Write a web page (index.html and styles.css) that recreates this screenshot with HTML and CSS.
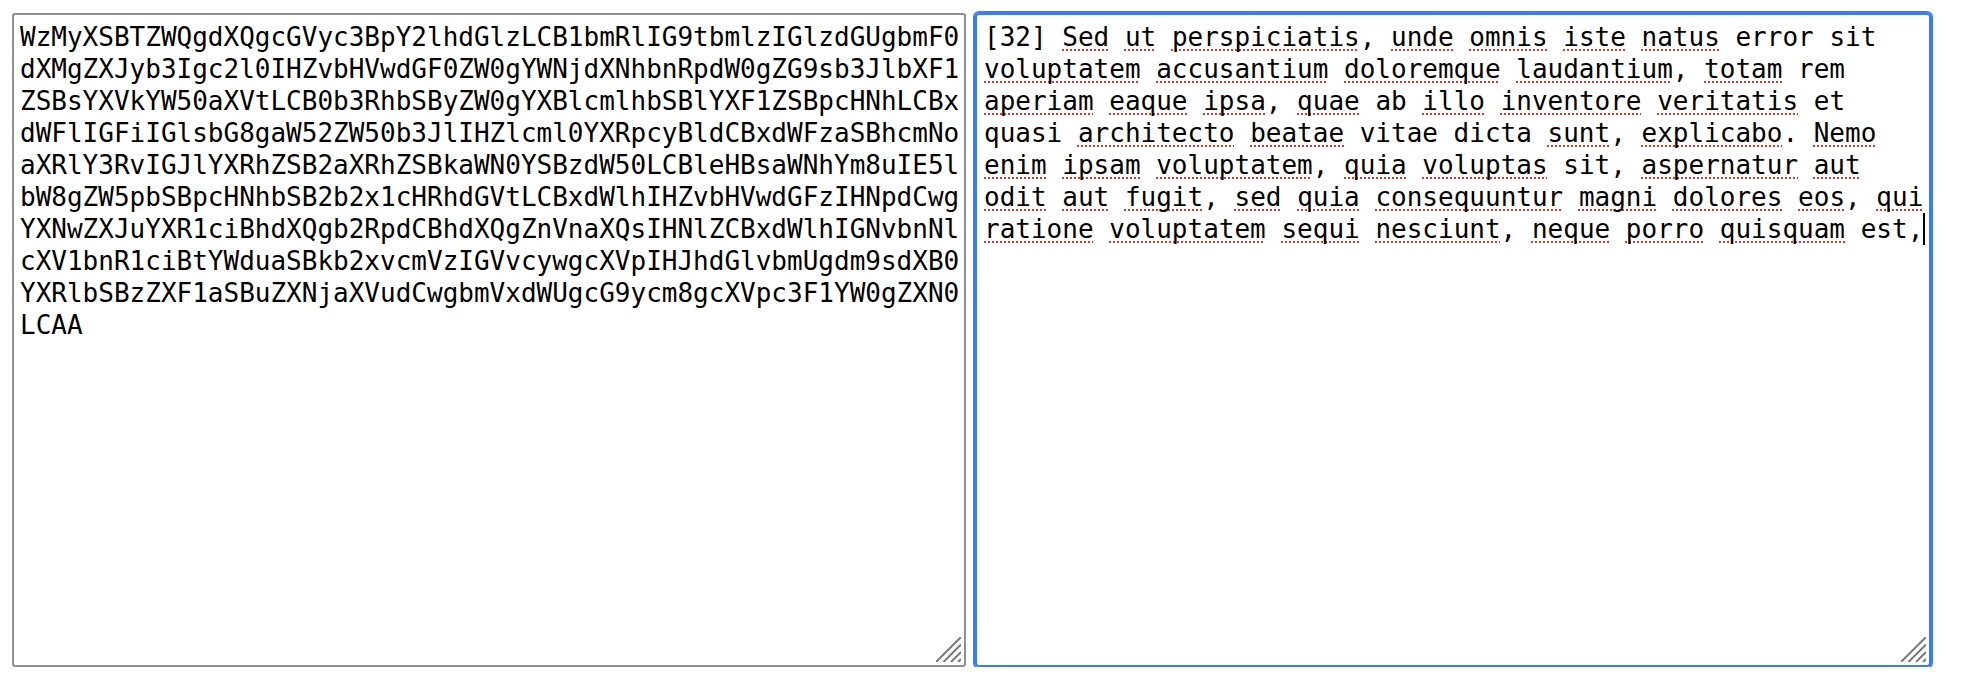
FILE: index.html
```html
<!DOCTYPE html>
<html lang="la">
<head>
<meta charset="utf-8">
<title>Base64</title>
<link rel="stylesheet" href="styles.css">
</head>
<body>
<main class="page">
  <div class="box box--plain" role="textbox" aria-multiline="true">
    <div class="text text--b64">WzMyXSBTZWQgdXQgcGVyc3BpY2lhdGlzLCB1bmRlIG9tbmlzIGlzdGUgbmF0dXMgZXJyb3Igc2l0IHZvbHVwdGF0ZW0gYWNjdXNhbnRpdW0gZG9sb3JlbXF1ZSBsYXVkYW50aXVtLCB0b3RhbSByZW0gYXBlcmlhbSBlYXF1ZSBpcHNhLCBxdWFlIGFiIGlsbG8gaW52ZW50b3JlIHZlcml0YXRpcyBldCBxdWFzaSBhcmNoaXRlY3RvIGJlYXRhZSB2aXRhZSBkaWN0YSBzdW50LCBleHBsaWNhYm8uIE5lbW8gZW5pbSBpcHNhbSB2b2x1cHRhdGVtLCBxdWlhIHZvbHVwdGFzIHNpdCwgYXNwZXJuYXR1ciBhdXQgb2RpdCBhdXQgZnVnaXQsIHNlZCBxdWlhIGNvbnNlcXV1bnR1ciBtYWduaSBkb2xvcmVzIGVvcywgcXVpIHJhdGlvbmUgdm9sdXB0YXRlbSBzZXF1aSBuZXNjaXVudCwgbmVxdWUgcG9ycm8gcXVpc3F1YW0gZXN0LCAA</div>
    <svg class="grip" width="25" height="25" viewBox="0 0 25 25" aria-hidden="true"><path d="M0 25L25 0M7.5 25L25 7.5M15 25L25 15M22 25L25 22"/></svg>
  </div>
  <div class="box box--focused" role="textbox" aria-multiline="true">
    <div class="text text--plain">[32] <span class="sp">Sed</span> <span class="sp">ut</span> <span class="sp">perspiciatis</span>, <span class="sp">unde</span> <span class="sp">omnis</span> <span class="sp">iste</span> <span class="sp">natus</span> error sit <span class="sp">voluptatem</span> <span class="sp">accusantium</span> <span class="sp">doloremque</span> <span class="sp">laudantium</span>, <span class="sp">totam</span> rem <span class="sp">aperiam</span> <span class="sp">eaque</span> <span class="sp">ipsa</span>, <span class="sp">quae</span> ab <span class="sp">illo</span> <span class="sp">inventore</span> <span class="sp">veritatis</span> et quasi <span class="sp">architecto</span> <span class="sp">beatae</span> vitae dicta <span class="sp">sunt</span>, <span class="sp">explicabo</span>. <span class="sp">Nemo</span> <span class="sp">enim</span> <span class="sp">ipsam</span> <span class="sp">voluptatem</span>, <span class="sp">quia</span> <span class="sp">voluptas</span> sit, <span class="sp">aspernatur</span> <span class="sp">aut</span> <span class="sp">odit</span> <span class="sp">aut</span> <span class="sp">fugit</span>, <span class="sp">sed</span> <span class="sp">quia</span> <span class="sp">consequuntur</span> <span class="sp">magni</span> <span class="sp">dolores</span> <span class="sp">eos</span>, <span class="sp">qui</span> <span class="sp">ratione</span> <span class="sp">voluptatem</span> <span class="sp">sequi</span> <span class="sp">nesciunt</span>, <span class="sp">neque</span> <span class="sp">porro</span> <span class="sp">quisquam</span> est,<span class="caret"></span></div>
    <svg class="grip" width="25" height="25" viewBox="0 0 25 25" aria-hidden="true"><path d="M0 25L25 0M7.5 25L25 7.5M15 25L25 15M22 25L25 22"/></svg>
  </div>
</main>
</body>
</html>
```

FILE: styles.css
```css
html, body {
  margin: 0;
  background: #ffffff;
}

.page {
  display: flex;
  gap: 9px;
  padding: 13px 0 0 12px;
}

.box {
  position: relative;
  box-sizing: border-box;
  height: 654px;
  border: 2px solid #918f99;
  border-radius: 3px;
  padding: 6px 4px 6px 6px;
  font-family: "DejaVu Sans Mono", monospace;
  font-size: 26px;
  line-height: 32px;
  color: #000000;
  background: #ffffff;
}

.box--plain {
  width: 954px;
}

.box--focused {
  width: 956px;
  border-color: #3b7cf1;
  outline: 2px solid #3b7cf1;
  border-radius: 4px;
  padding: 6px 4px 6px 7px;
}

.text {
  white-space: pre-wrap;
}

.text--b64 {
  overflow-wrap: anywhere;
  word-break: break-all;
}

.sp {
  text-decoration-line: underline;
  text-decoration-style: dotted;
  text-decoration-color: #e8332b;
  text-decoration-thickness: 2px;
  text-underline-offset: 3px;
  text-decoration-skip-ink: none;
}

.caret {
  display: inline-block;
  width: 2px;
  height: 32px;
  margin-right: -2px;
  vertical-align: top;
  background: #000000;
}

.grip {
  position: absolute;
  right: 3px;
  bottom: 3px;
}

.grip path {
  fill: none;
  stroke: #7a7a7a;
  stroke-width: 2;
}
```
